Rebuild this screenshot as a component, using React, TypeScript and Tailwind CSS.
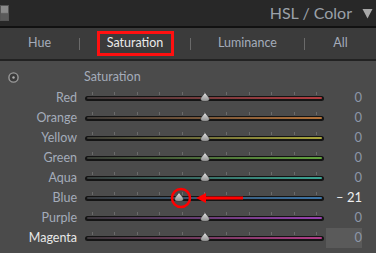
import React from 'react';

const rows = [
  { name: 'Red', value: 0, track: 'bg-[linear-gradient(to_right,#3e3a3a,#b23c40)]' },
  { name: 'Orange', value: 0, track: 'bg-[linear-gradient(to_right,#3e3b38,#b4723a)]' },
  { name: 'Yellow', value: 0, track: 'bg-[linear-gradient(to_right,#3d3d38,#aaa63c)]' },
  { name: 'Green', value: 0, track: 'bg-[linear-gradient(to_right,#3a3d38,#62a23c)]' },
  { name: 'Aqua', value: 0, track: 'bg-[linear-gradient(to_right,#383d3c,#3aa292)]' },
  { name: 'Blue', value: -21, track: 'bg-[linear-gradient(to_right,#383a3d,#3c74a6)]' },
  { name: 'Purple', value: 0, track: 'bg-[linear-gradient(to_right,#3c383d,#9640b0)]' },
  { name: 'Magenta', value: 0, track: 'bg-[linear-gradient(to_right,#3d383b,#b03c86)]' },
];

function Thumb() {
  return (
    <svg width="11" height="10" viewBox="0 0 11 10">
      <defs>
        <linearGradient id="th" x1="0" y1="0" x2="0" y2="1">
          <stop offset="0" stopColor="#e4e4e4" />
          <stop offset="1" stopColor="#8c8c8c" />
        </linearGradient>
      </defs>
      <path d="M5.5 0.5 L9.8 6 Q10.5 9.5 5.5 9.5 Q0.5 9.5 1.2 6 Z" fill="url(#th)" stroke="#2a2a2a" strokeWidth="0.6" />
    </svg>
  );
}

function SliderRow({ name, value, track, active }: { name: string; value: number; track: string; active?: boolean }) {
  const pct = 50 + value * 0.5;
  return (
    <div className="flex items-center h-5">
      <div className={`w-[77px] text-right text-[12.5px] ${active ? 'text-[#e8e8e8]' : 'text-[#a4acba]'}`}>{name}</div>
      <div className="relative ml-[8px] w-[239px] h-[5px]">
        <div className="absolute left-0 right-0 -top-[4px] flex justify-between px-[7px]">
          {Array.from({ length: 11 }).map((_, i) => (
            <div key={i} className="w-px h-[3px] bg-[#6a6a6a]" />
          ))}
        </div>
        <div className="h-[5px] rounded-full bg-[#141414] flex items-center px-[2px]">
          <div className={`h-[2px] w-full rounded-full ${track}`} />
        </div>
        <div className="absolute -top-[4px] -translate-x-1/2" style={{ left: `${pct}%` }}>
          <Thumb />
        </div>
      </div>
      <div
        className={`ml-[2px] w-[36px] h-5 flex items-center justify-end text-[13px] ${
          active ? 'bg-[#5a5a5a] text-[#8c96a8]' : value !== 0 ? 'text-[#f0f0f0]' : 'text-[#8c96a8]'
        }`}
      >
        {value < 0 ? `– ${Math.abs(value)}` : value}
      </div>
    </div>
  );
}

export default function App() {
  return (
    <div className="w-[376px] h-[253px] overflow-hidden bg-[#4b4b4b] font-['Lato',sans-serif] relative">
      {/* Header */}
      <div className="h-[28px] bg-[#282828] flex items-center border-b-2 border-[#111]">
        <div className="w-[9px] h-[16px] border border-[#555] bg-[linear-gradient(to_bottom,#8a8a8a_0%,#8a8a8a_45%,#5a5a5a_55%,#5a5a5a_100%)]" />
        <div className="ml-auto text-[16px] leading-none text-[#9ba1a9]">HSL / Color</div>
        <div className="ml-[10px] mr-[3px]">
          <svg width="11" height="11" viewBox="0 0 11 11">
            <path d="M0.5 1 L10.5 1 L5.5 10.5 Z" fill="#a8a8a8" />
          </svg>
        </div>
      </div>

      {/* Tabs */}
      <div className="h-[33px] bg-[#3b3b3b] border-b-2 border-[#222] flex items-center text-[12.5px] text-[#a4acba]">
        <div className="w-[79px] text-center">Hue</div>
        <div className="w-px h-[12px] bg-[#6a6a6a]" />
        <div className="w-[110px] flex justify-center">
          <div className="w-[77px] h-[25px] border-[3px] border-[#ff1010] flex items-center justify-center text-[#eaeaea]">
            Saturation
          </div>
        </div>
        <div className="w-px h-[12px] bg-[#6a6a6a]" />
        <div className="w-[113px] text-center">Luminance</div>
        <div className="w-px h-[12px] bg-[#6a6a6a]" />
        <div className="flex-1 text-center">All</div>
      </div>

      {/* Body */}
      <div className="pt-[5px]">
        <div className="flex items-center h-[22px]">
          <div className="w-[26px] flex justify-center">
            <svg width="11" height="11" viewBox="0 0 11 11">
              <circle cx="5.5" cy="5.5" r="4.6" fill="#3a3a3a" stroke="#9a9a9a" strokeWidth="1.4" />
              <circle cx="5.5" cy="5.5" r="1.2" fill="#b0b0b0" />
            </svg>
          </div>
          <div className="ml-[58px] text-[12.5px] text-[#a4acba]">Saturation</div>
        </div>
        {rows.map((r) => (
          <SliderRow key={r.name} {...r} active={r.name === 'Magenta'} />
        ))}
      </div>

      {/* Annotation overlay */}
      <svg className="absolute left-0 top-0 pointer-events-none" width="376" height="253">
        <circle cx="181" cy="198" r="9" fill="none" stroke="#ff0000" strokeWidth="2.5" />
        <line x1="243" y1="198" x2="204" y2="198" stroke="#ff0000" strokeWidth="3" />
        <path d="M196 198 L206 193 L206 203 Z" fill="#ff0000" />
      </svg>
    </div>
  );
}
